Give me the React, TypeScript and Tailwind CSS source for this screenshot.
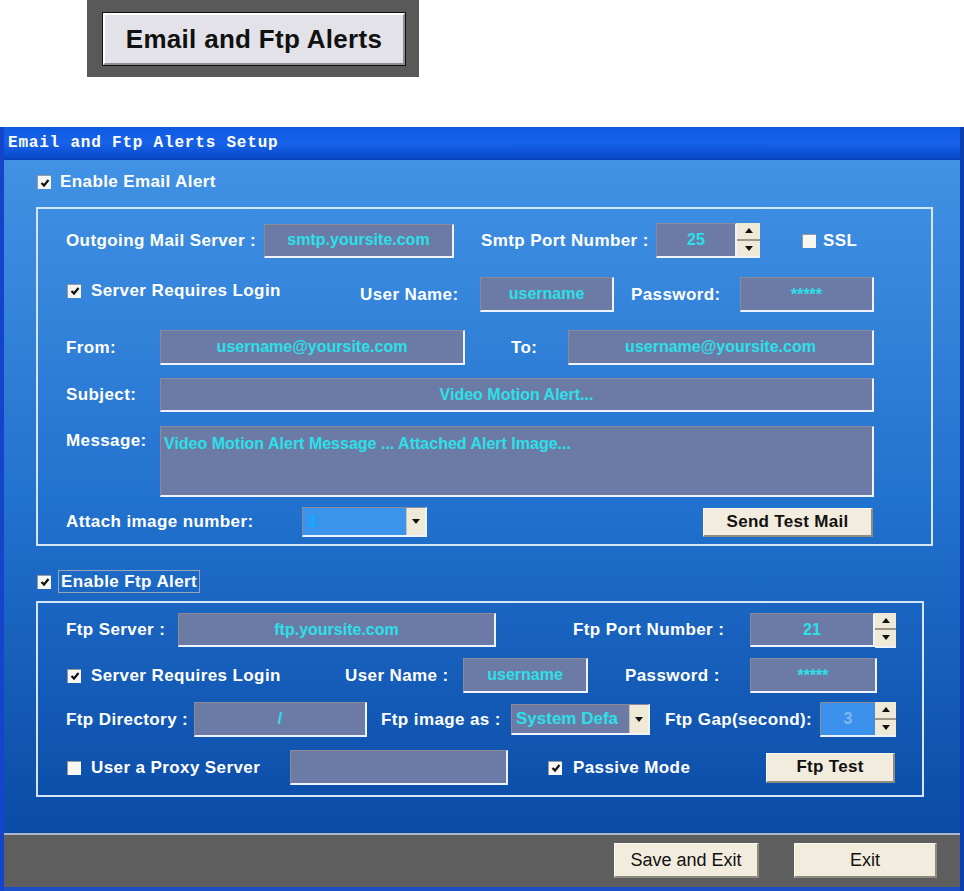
import React from 'react'

const label = "font-['Liberation_Sans',Arial,sans-serif] font-bold text-[17px] tracking-[0.4px] text-white whitespace-nowrap shrink-0"
const fieldText = "font-['Liberation_Sans',Arial,sans-serif] font-bold text-[16px] text-[#2ce0ea] whitespace-nowrap"
const sunken = 'bg-[#6b7ba6] border-t border-l border-t-[#8a8a98] border-l-[#8a8a98] border-b-2 border-r-2 border-b-[#eef3ff] border-r-[#eef3ff]'

function Check({ checked }: { checked: boolean }) {
  return (
    <div className="w-[14px] h-[14px] shrink-0 bg-[#f6f6f2] border-t border-l border-[#9a9a9a] flex items-center justify-center">
      {checked && (
        <svg width="10" height="10" viewBox="0 0 10 10">
          <path d="M1.5 5 L4 7.5 L8.5 2" stroke="#111" strokeWidth="2.2" fill="none" />
        </svg>
      )}
    </div>
  )
}

function Field({ w, h = 35, value, align = 'center', top = false }: { w: number; h?: number; value?: string; align?: 'center' | 'left'; top?: boolean }) {
  return (
    <div
      className={`${sunken} shrink-0 flex ${top ? 'items-start pt-[5px]' : 'items-center'} ${align === 'center' ? 'justify-center' : 'justify-start pl-[3px]'} overflow-hidden`}
      style={{ width: w, height: h }}
    >
      {value && <span className={fieldText}>{value}</span>}
    </div>
  )
}

function Arrow({ up }: { up: boolean }) {
  return (
    <svg width="8" height="5" viewBox="0 0 8 5">
      {up ? <path d="M0 5 L4 0 L8 5 Z" fill="#111" /> : <path d="M0 0 L4 5 L8 0 Z" fill="#111" />}
    </svg>
  )
}

function Spinner({ w }: { w: number }) {
  return (
    <div className="shrink-0 flex flex-col h-[35px] bg-[#efe9d8] border-b-2 border-[#eef3ff]" style={{ width: w }}>
      <div className="flex-1 flex items-center justify-center border-b-2 border-[#9c978a]">
        <Arrow up />
      </div>
      <div className="flex-1 flex items-center justify-center">
        <Arrow up={false} />
      </div>
    </div>
  )
}

function Select({ w, h, value, bg, color }: { w: number; h: number; value: string; bg: string; color: string }) {
  return (
    <div className="shrink-0 flex border-t border-l border-[#8a8a98] border-b-2 border-r-2 border-b-[#eef3ff] border-r-[#eef3ff]" style={{ width: w, height: h }}>
      <div className="flex-1 flex items-center pl-[4px] overflow-hidden" style={{ background: bg }}>
        <span className="font-['Liberation_Sans',Arial,sans-serif] font-bold text-[17px] whitespace-nowrap" style={{ color }}>
          {value}
        </span>
      </div>
      <div className="w-[19px] bg-[#efe9d8] flex items-center justify-center border-l border-[#c8c2b2]">
        <Arrow up={false} />
      </div>
    </div>
  )
}

function Btn({ w, h, text, cls = '' }: { w: number; h: number; text: string; cls?: string }) {
  return (
    <div
      className={`shrink-0 bg-[#f1ecdd] border-t border-l border-[#fbf8ee] border-b-2 border-r-2 border-b-[#8d8a80] border-r-[#8d8a80] flex items-center justify-center text-[#111] whitespace-nowrap ${cls}`}
      style={{ width: w, height: h }}
    >
      {text}
    </div>
  )
}

export default function App() {
  return (
    <div className="w-[964px] h-[891px] bg-white overflow-hidden font-['Liberation_Sans',Arial,sans-serif]">
      {/* top caption button */}
      <div className="h-[127px]">
        <div className="ml-[87px] w-[332px] h-[77px] bg-[#595959] pt-[12px] pl-[15px]">
          <div className="w-[304px] h-[54px] border border-[#111] bg-[#e2e2e8] flex">
            <div className="flex-1 border-t-2 border-l-2 border-white border-b-2 border-r-2 border-b-[#8c8c92] border-r-[#8c8c92] flex items-center justify-center">
              <span className="font-bold text-[26px] text-[#111] tracking-[0.3px]">Email and Ftp Alerts</span>
            </div>
          </div>
        </div>
      </div>

      {/* dialog */}
      <div className="h-[764px] flex flex-col border-l-4 border-r-4 border-l-[#1444cc] border-r-[#0a3db0]">
        <div className="h-[33px] shrink-0 bg-gradient-to-b from-[#0d5ae2] via-[#1762e8] to-[#0848c8] flex items-center pl-[4px] border-b border-[#0840b8]">
          <span className="font-['Liberation_Mono',monospace] font-bold text-[16px] tracking-[0.8px] text-white">Email and Ftp Alerts Setup</span>
        </div>

        <div className="flex-1 bg-gradient-to-b from-[#4192e4] via-[#2272cf] to-[#0a4ba6] flex flex-col">
          {/* enable email */}
          <div className="mt-[11px] h-[22px] ml-[33px] flex items-center">
            <Check checked />
            <span className={`${label} ml-[9px]`}>Enable Email Alert</span>
          </div>

          <div className="mt-[14px] ml-[32px] w-[897px] border-2 border-[#d4e6f8] pl-[28px] pt-[14px] pb-[7px] flex flex-col">
            <div className="h-[35px] flex items-center">
              <span className={`${label} w-[198px]`}>Outgoing Mail Server :</span>
              <Field w={190} h={34} value="smtp.yoursite.com" />
              <span className={`${label} ml-[27px] w-[175px]`}>Smtp Port Number :</span>
              <Field w={81} value="25" />
              <Spinner w={23} />
              <div className="ml-[42px]">
                <Check checked={false} />
              </div>
              <span className={`${label} ml-[7px]`}>SSL</span>
            </div>

            <div className="mt-[19px] h-[35px] flex items-center">
              <div className="ml-[1px] -mt-[8px]">
                <Check checked />
              </div>
              <span className={`${label} ml-[10px] w-[269px] -mt-[8px]`}>Server Requires Login</span>
              <span className={`${label} w-[120px]`}>User Name:</span>
              <Field w={134} value="username" />
              <span className={`${label} ml-[17px] w-[109px]`}>Password:</span>
              <Field w={134} value="*****" top />
            </div>

            <div className="mt-[18px] h-[35px] flex items-center">
              <span className={`${label} w-[94px]`}>From:</span>
              <Field w={305} value="username@yoursite.com" />
              <span className={`${label} ml-[46px] w-[57px]`}>To:</span>
              <Field w={306} value="username@yoursite.com" />
            </div>

            <div className="mt-[13px] h-[34px] flex items-center">
              <span className={`${label} w-[94px]`}>Subject:</span>
              <Field w={714} h={34} value="Video Motion Alert..." />
            </div>

            <div className="mt-[14px] h-[71px] flex items-start">
              <span className={`${label} w-[94px] mt-[2px]`}>Message:</span>
              <Field w={714} h={71} value="Video Motion Alert Message ... Attached Alert Image..." align="left" top />
            </div>

            <div className="mt-[10px] h-[30px] flex items-center">
              <span className={`${label} w-[236px]`}>Attach image number:</span>
              <Select w={125} h={30} value="3" bg="#3b94ec" color="#12aaff" />
              <div className="ml-[276px]">
                <Btn w={170} h={29} text="Send Test Mail" cls="font-bold text-[17px] tracking-[0.3px]" />
              </div>
            </div>
          </div>

          {/* enable ftp */}
          <div className="mt-[24px] h-[23px] ml-[33px] flex items-center">
            <Check checked />
            <div className="ml-[7px] h-[23px] px-[2px] border border-[#9aa6b6] flex items-center">
              <span className={label}>Enable Ftp Alert</span>
            </div>
          </div>

          <div className="mt-[8px] ml-[32px] w-[888px] border-2 border-[#d4e6f8] pl-[28px] pt-[10px] pb-[10px] flex flex-col">
            <div className="h-[34px] flex items-center">
              <span className={`${label} w-[112px]`}>Ftp Server :</span>
              <Field w={318} h={34} value="ftp.yoursite.com" />
              <span className={`${label} ml-[77px] w-[177px]`}>Ftp Port Number :</span>
              <Field w={125} h={34} value="21" />
              <Spinner w={21} />
            </div>

            <div className="mt-[11px] h-[35px] flex items-center">
              <div className="ml-[1px]">
                <Check checked />
              </div>
              <span className={`${label} ml-[10px] w-[254px]`}>Server Requires Login</span>
              <span className={`${label} w-[118px]`}>User Name :</span>
              <Field w={125} value="username" />
              <span className={`${label} ml-[37px] w-[125px]`}>Password :</span>
              <Field w={127} value="*****" top />
            </div>

            <div className="mt-[9px] h-[35px] flex items-center">
              <span className={`${label} w-[128px]`}>Ftp Directory :</span>
              <Field w={173} value="/" />
              <span className={`${label} ml-[14px] w-[130px]`}>Ftp image as :</span>
              <Select w={139} h={31} value="System Defa" bg="#6b7ba6" color="#2ce0ea" />
              <span className={`${label} ml-[15px] w-[155px]`}>Ftp Gap(second):</span>
              <div className="shrink-0 w-[55px] h-[35px] bg-[#3a90ea] border-t border-l border-[#8a8a98] border-b-2 border-b-[#eef3ff] flex items-center justify-center">
                <span className="font-bold text-[16px] text-[#7fb8ee]">3</span>
              </div>
              <Spinner w={21} />
            </div>

            <div className="mt-[13px] h-[35px] flex items-center">
              <div className="ml-[1px]">
                <Check checked={false} />
              </div>
              <span className={`${label} ml-[10px] w-[199px]`}>User a Proxy Server</span>
              <Field w={218} />
              <div className="ml-[40px]">
                <Check checked />
              </div>
              <span className={`${label} ml-[11px] w-[193px]`}>Passive Mode</span>
              <Btn w={129} h={30} text="Ftp Test" cls="font-bold text-[17px] tracking-[0.3px]" />
            </div>
          </div>
          <div className="flex-1" />
        </div>

        {/* footer */}
        <div className="h-[54px] shrink-0 bg-[#5e5e5e] border-t-2 border-[#a9b6c6] flex justify-end items-start pt-[8px] pr-[23px]">
          <Btn w={145} h={35} text="Save and Exit" cls="text-[18px]" />
          <div className="ml-[35px]">
            <Btn w={143} h={35} text="Exit" cls="text-[18px]" />
          </div>
        </div>
        <div className="h-[4px] shrink-0 bg-[#1a4fc8]" />
      </div>
    </div>
  )
}
